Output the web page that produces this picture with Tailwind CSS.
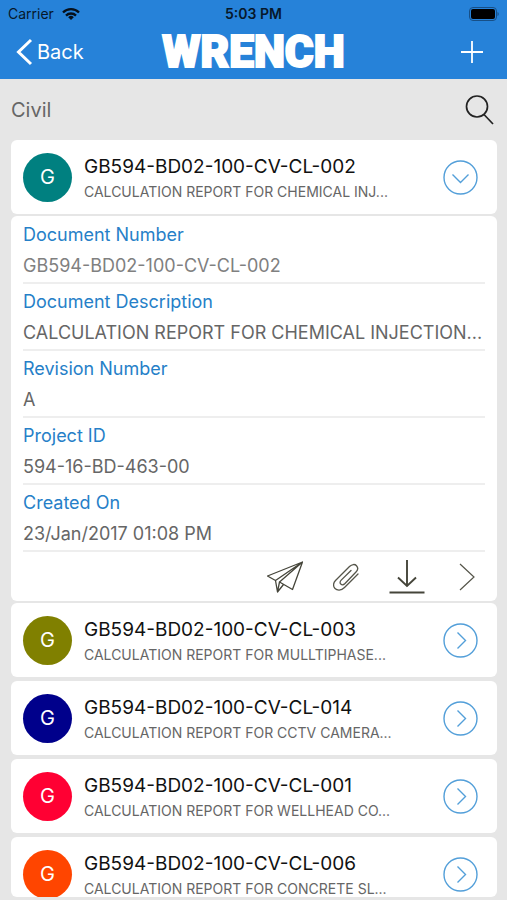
<!DOCTYPE html>
<html lang="en">
<head>
  <meta charset="UTF-8" />
  <meta name="viewport" content="width=device-width, initial-scale=1" />
  <title>Wrench - Civil</title>
  <script src="https://cdn.jsdelivr.net/npm/@tailwindcss/browser@4"></script>
</head>
<body class="bg-[#e6e6e6] h-screen flex flex-col overflow-hidden font-['Inter',sans-serif] text-[#111]">

  <header class="bg-[#2682d9] shrink-0">
    <!-- Status bar -->
    <div class="grid grid-cols-3 items-center h-[27px] px-2 text-sm text-[#06182b]">
      <div class="flex items-center gap-2">
        <span>Carrier</span>
        <svg class="w-[18px] h-3" viewBox="0 0 18 12" fill="none" stroke="#06101c" stroke-width="2.3">
          <path d="M1 4.5a11.3 11.3 0 0 1 16 0" />
          <path d="M4 7.6a7 7 0 0 1 10 0" />
          <path d="M9 12 6.2 9.2a4 4 0 0 1 5.6 0z" fill="#06101c" stroke="none" />
        </svg>
      </div>
      <span class="text-center font-semibold">5:03 PM</span>
      <svg class="w-[30px] h-[14px] justify-self-end" viewBox="0 0 30 14">
        <rect x="0.5" y="0.5" width="27" height="13" rx="3.5" fill="none" stroke="#174f86" />
        <rect x="2" y="2" width="24" height="10" rx="2" fill="#000" />
        <path d="M28.5 5v4c1.600-.6 1.600-3.400 0-4z" fill="#174f86" />
      </svg>
    </div>

    <!-- Navigation -->
    <div class="grid grid-cols-[1fr_auto_1fr] items-center h-[52px] px-4 pb-[2px] text-white">
      <button type="button" class="flex items-center gap-1 text-xl justify-self-start">
        <svg class="w-[17px] h-7" viewBox="0 0 17 28" fill="none" stroke="currentColor" stroke-width="3">
          <path d="M15 2 2.500 14 15 26" />
        </svg>
        Back
      </button>
      <h1 class="font-['Roboto',sans-serif] font-black text-[44px] leading-[50px] [-webkit-text-stroke:2px_white]">WRENCH</h1>
      <button type="button" aria-label="Add" class="justify-self-end pr-2">
        <svg class="w-[22px] h-[22px]" viewBox="0 0 22 22" fill="none" stroke="currentColor" stroke-width="1.8">
          <path d="M11 0v22M0 11h22" />
        </svg>
      </button>
    </div>
  </header>

  <!-- Folder title -->
  <div class="flex items-center justify-between shrink-0 h-[61px] pl-[11px] pr-[13px]">
    <h2 class="text-xl text-[#666]">Civil</h2>
    <button type="button" aria-label="Search">
      <svg class="w-[29px] h-[30px]" viewBox="0 0 29 30" fill="none" stroke="#222" stroke-width="1.7">
        <circle cx="12" cy="11.500" r="10.500" />
        <path d="M19 19.500 28 29" />
      </svg>
    </button>
  </div>

  <main class="flex-1 min-h-0 pl-[11px] pr-[10px] pb-[3px]">
    <div class="h-full overflow-hidden rounded-b-md">

      <article class="flex items-center h-[74px] pl-3 pr-[19px] bg-white rounded-md">
        <div class="flex items-center justify-center shrink-0 size-[49px] rounded-full bg-[#008080] text-white text-xl">G</div>
        <div class="flex-1 min-w-0 pl-3">
          <h3 class="text-[19px] leading-[29px] truncate">GB594-BD02-100-CV-CL-002</h3>
          <p class="text-sm leading-[22px] text-[#666] truncate">CALCULATION REPORT FOR CHEMICAL INJ...</p>
        </div>
        <button type="button" aria-label="Collapse" aria-expanded="true" class="shrink-0">
          <svg class="size-[35px]" viewBox="0 0 35 35" fill="none" stroke="#539fd9" stroke-width="1.4">
            <circle cx="17.500" cy="17.500" r="16.500" />
            <path d="m9.500 14.500 8 8 8-8" />
          </svg>
        </button>
      </article>

      <!-- Document details -->
      <section class="mt-[2px] px-3 pt-px bg-white rounded-md">
        <dl class="text-lg text-[#666]">
          <div class="h-[67px] pt-1 border-b-2 border-[#eee]">
            <dt class="leading-7 text-[#2680c8]">Document Number</dt>
            <dd class="leading-[33px] text-[#808080] truncate">GB594-BD02-100-CV-CL-002</dd>
          </div>
          <div class="h-[67px] pt-1 border-b-2 border-[#eee]">
            <dt class="leading-7 text-[#2680c8]">Document Description</dt>
            <dd class="leading-[33px] truncate">CALCULATION REPORT FOR CHEMICAL INJECTION...</dd>
          </div>
          <div class="h-[67px] pt-1 border-b-2 border-[#eee]">
            <dt class="leading-7 text-[#2680c8]">Revision Number</dt>
            <dd class="leading-[33px] truncate">A</dd>
          </div>
          <div class="h-[67px] pt-1 border-b-2 border-[#eee]">
            <dt class="leading-7 text-[#2680c8]">Project ID</dt>
            <dd class="leading-[33px] truncate">594-16-BD-463-00</dd>
          </div>
          <div class="h-[67px] pt-1 border-b-2 border-[#eee]">
            <dt class="leading-7 text-[#2680c8]">Created On</dt>
            <dd class="leading-[33px] truncate">23/Jan/2017 01:08 PM</dd>
          </div>
        </dl>
        <div class="flex items-center justify-end h-[49px] pr-[10px] gap-[30px]">
          <button type="button" aria-label="Send">
            <svg class="w-9 h-8" viewBox="0 0 36 32" fill="none" stroke="#45453a" stroke-width="1.3" stroke-linejoin="round">
              <path d="M35.500 1 .5 15l8 4.500L35.500 1 25.500 28.500l-13-7.500L35.500 1M8.500 19.500l2 11.500 2-10M10.500 31l6-7.500" />
            </svg>
          </button>
          <button type="button" aria-label="Attachments">
            <svg class="w-[26px] h-7" viewBox="0 0 26 28" fill="none" stroke="#55554a" stroke-width="1.3" stroke-linecap="round">
              <path d="M25 11 11.500 24.500c-3.500 3.500-7.500 3-9.500 1s-2-5.500.5-8L16.500 3.500c2.500-2.500 5.500-2.500 7-.8s1.500 4.300-.5 6.300L12 20.500c-1.500 1.500-3.200 1.500-4.200.6s-1-2.600.4-4L18 7.500" />
            </svg>
          </button>
          <button type="button" aria-label="Download">
            <svg class="w-9 h-[34px]" viewBox="0 0 36 34" fill="none" stroke="#45453a" stroke-width="1.9">
              <path d="M18 0v26M9 17.500l9 8.500 9-8.500M.5 32.500h35" />
            </svg>
          </button>
          <button type="button" aria-label="Open" class="pl-1">
            <svg class="w-4 h-7" viewBox="0 0 16 28" fill="none" stroke="#55554a" stroke-width="1.2">
              <path d="m1 1 14 13L1 27" />
            </svg>
          </button>
        </div>
      </section>

      <div class="flex flex-col gap-1 mt-[2px]">
        <article class="flex items-center shrink-0 h-[74px] pl-3 pr-[19px] bg-white rounded-md">
          <div class="flex items-center justify-center shrink-0 size-[49px] rounded-full bg-[#808000] text-white text-xl">G</div>
          <div class="flex-1 min-w-0 pl-3">
            <h3 class="text-[19px] leading-[29px] truncate">GB594-BD02-100-CV-CL-003</h3>
            <p class="text-sm leading-[22px] text-[#666] truncate">CALCULATION REPORT FOR MULLTIPHASE...</p>
          </div>
          <button type="button" aria-label="Expand" class="shrink-0">
            <svg class="size-[35px]" viewBox="0 0 35 35" fill="none" stroke="#539fd9" stroke-width="1.4">
              <circle cx="17.500" cy="17.500" r="16.500" />
              <path d="m14.500 9.500 8 8-8 8" />
            </svg>
          </button>
        </article>

        <article class="flex items-center shrink-0 h-[74px] pl-3 pr-[19px] bg-white rounded-md">
          <div class="flex items-center justify-center shrink-0 size-[49px] rounded-full bg-[#00008b] text-white text-xl">G</div>
          <div class="flex-1 min-w-0 pl-3">
            <h3 class="text-[19px] leading-[29px] truncate">GB594-BD02-100-CV-CL-014</h3>
            <p class="text-sm leading-[22px] text-[#666] truncate">CALCULATION REPORT FOR CCTV CAMERA...</p>
          </div>
          <button type="button" aria-label="Expand" class="shrink-0">
            <svg class="size-[35px]" viewBox="0 0 35 35" fill="none" stroke="#539fd9" stroke-width="1.4">
              <circle cx="17.500" cy="17.500" r="16.500" />
              <path d="m14.500 9.500 8 8-8 8" />
            </svg>
          </button>
        </article>

        <article class="flex items-center shrink-0 h-[74px] pl-3 pr-[19px] bg-white rounded-md">
          <div class="flex items-center justify-center shrink-0 size-[49px] rounded-full bg-[#ff0033] text-white text-xl">G</div>
          <div class="flex-1 min-w-0 pl-3">
            <h3 class="text-[19px] leading-[29px] truncate">GB594-BD02-100-CV-CL-001</h3>
            <p class="text-sm leading-[22px] text-[#666] truncate">CALCULATION REPORT FOR WELLHEAD CO...</p>
          </div>
          <button type="button" aria-label="Expand" class="shrink-0">
            <svg class="size-[35px]" viewBox="0 0 35 35" fill="none" stroke="#539fd9" stroke-width="1.4">
              <circle cx="17.500" cy="17.500" r="16.500" />
              <path d="m14.500 9.500 8 8-8 8" />
            </svg>
          </button>
        </article>

        <article class="flex items-center shrink-0 h-[74px] pl-3 pr-[19px] bg-white rounded-md">
          <div class="flex items-center justify-center shrink-0 size-[49px] rounded-full bg-[#ff4500] text-white text-xl">G</div>
          <div class="flex-1 min-w-0 pl-3">
            <h3 class="text-[19px] leading-[29px] truncate">GB594-BD02-100-CV-CL-006</h3>
            <p class="text-sm leading-[22px] text-[#666] truncate">CALCULATION REPORT FOR CONCRETE SL...</p>
          </div>
          <button type="button" aria-label="Expand" class="shrink-0">
            <svg class="size-[35px]" viewBox="0 0 35 35" fill="none" stroke="#539fd9" stroke-width="1.4">
              <circle cx="17.500" cy="17.500" r="16.500" />
              <path d="m14.500 9.500 8 8-8 8" />
            </svg>
          </button>
        </article>
      </div>

    </div>
  </main>
</body>
</html>
